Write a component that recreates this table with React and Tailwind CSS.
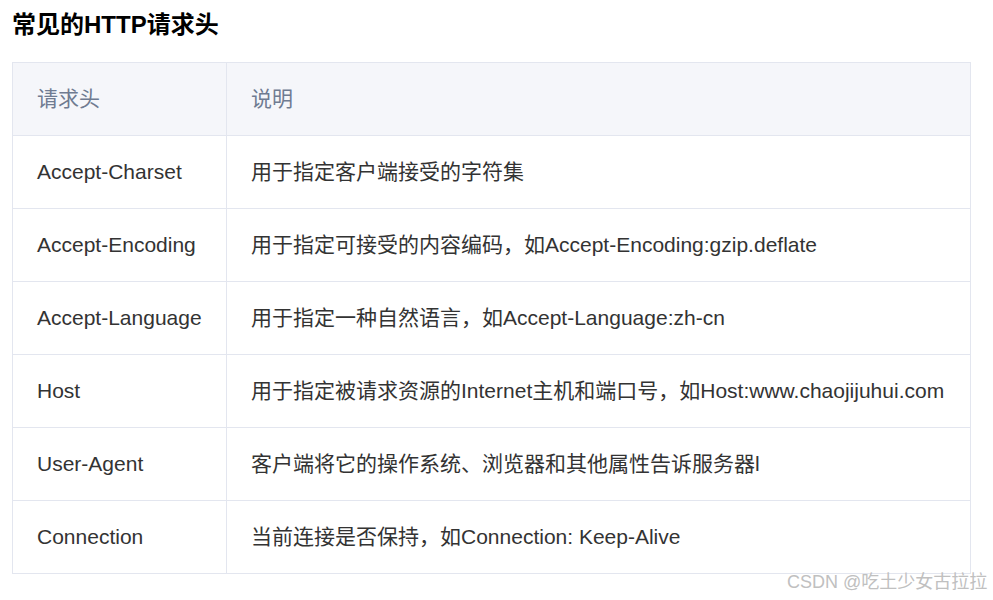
import React from "react";

const rows = [
  ["Accept-Charset", "用于指定客户端接受的字符集"],
  ["Accept-Encoding", "用于指定可接受的内容编码，如Accept-Encoding:gzip.deflate"],
  ["Accept-Language", "用于指定一种自然语言，如Accept-Language:zh-cn"],
  ["Host", "用于指定被请求资源的Internet主机和端口号，如Host:www.chaojijuhui.com"],
  ["User-Agent", "客户端将它的操作系统、浏览器和其他属性告诉服务器l"],
  ["Connection", "当前连接是否保持，如Connection: Keep-Alive"],
];

const font = {
  fontFamily: '"Liberation Sans", Arial, "Noto Sans CJK SC", sans-serif',
};

const App = () => {
  return (
    <div className="relative h-[600px] overflow-hidden bg-white" style={font}>
      <div className="px-3 pt-[10px]">
        <h3 className="text-[24px] font-bold leading-[30px] text-black">常见的HTTP请求头</h3>
        <table className="mt-[22px] w-[959px] border-collapse text-[21px]">
          <thead>
            <tr className="bg-[#f5f6fa]">
              <th className="h-[73px] w-[214px] border border-[#e3e6ef] px-6 text-left font-normal text-[#6f7b91]">
                请求头
              </th>
              <th className="h-[73px] border border-[#e3e6ef] px-6 text-left font-normal text-[#6f7b91]">
                说明
              </th>
            </tr>
          </thead>
          <tbody>
            {rows.map(([name, desc]) => (
              <tr key={name}>
                <td className="h-[73px] border border-[#e3e6ef] px-6 text-[#333]">{name}</td>
                <td className="h-[73px] border border-[#e3e6ef] px-6 text-[#333]">{desc}</td>
              </tr>
            ))}
          </tbody>
        </table>
        <h3 className="mt-[24px] text-[24px] font-bold leading-[30px] text-black">常见的HTTP响应头</h3>
      </div>
      <div className="absolute left-[787px] top-[570px] text-[18px] leading-[24px] text-[#c0c0c0]">CSDN @吃土少女古拉拉</div>
    </div>
  );
};

export default App;
